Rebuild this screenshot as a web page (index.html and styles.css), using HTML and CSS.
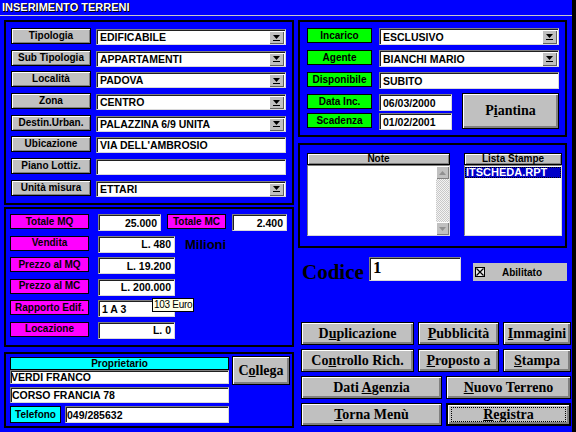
FILE: index.html
```html
<!DOCTYPE html>
<html>
<head>
<meta charset="utf-8">
<title>Inserimento Terreni</title>
<link rel="stylesheet" href="styles.css">
</head>
<body>
<div class="window">
  <div class="titlebar">INSERIMENTO TERRENI</div>
  <div class="main">
    <div class="col-left">
      <section class="panel p-ident">
        <div class="lbl gray">Tipologia</div>
        <div class="field combo"><span class="val">EDIFICABILE</span><span class="drop"><svg width="7" height="6" viewBox="0 0 7 6"><path d="M0 0H7L3.5 4Z"/><rect y="5" width="7" height="1"/></svg></span></div>
        <div class="lbl gray">Sub Tipologia</div>
        <div class="field combo"><span class="val">APPARTAMENTI</span><span class="drop"><svg width="7" height="6" viewBox="0 0 7 6"><path d="M0 0H7L3.5 4Z"/><rect y="5" width="7" height="1"/></svg></span></div>
        <div class="lbl gray">Località</div>
        <div class="field combo"><span class="val">PADOVA</span><span class="drop"><svg width="7" height="6" viewBox="0 0 7 6"><path d="M0 0H7L3.5 4Z"/><rect y="5" width="7" height="1"/></svg></span></div>
        <div class="lbl gray">Zona</div>
        <div class="field combo"><span class="val">CENTRO</span><span class="drop"><svg width="7" height="6" viewBox="0 0 7 6"><path d="M0 0H7L3.5 4Z"/><rect y="5" width="7" height="1"/></svg></span></div>
        <div class="lbl gray">Destin.Urban.</div>
        <div class="field combo"><span class="val">PALAZZINA 6/9 UNITA</span><span class="drop"><svg width="7" height="6" viewBox="0 0 7 6"><path d="M0 0H7L3.5 4Z"/><rect y="5" width="7" height="1"/></svg></span></div>
        <div class="lbl gray">Ubicazione</div>
        <div class="field">VIA DELL'AMBROSIO</div>
        <div class="lbl gray">Piano Lottiz.</div>
        <div class="field"></div>
        <div class="lbl gray">Unità misura</div>
        <div class="field combo"><span class="val">ETTARI</span><span class="drop"><svg width="7" height="6" viewBox="0 0 7 6"><path d="M0 0H7L3.5 4Z"/><rect y="5" width="7" height="1"/></svg></span></div>
      </section>

      <section class="panel p-prices">
        <div class="prow">
          <div class="lbl mag">Totale MQ</div>
          <div class="field num w63">25.000</div>
          <div class="lbl mag w59">Totale MC</div>
          <div class="field num w55">2.400</div>
        </div>
        <div class="prow">
          <div class="lbl mag">Vendita</div>
          <div class="field num">L. 480</div>
          <span class="milioni">Milioni</span>
        </div>
        <div class="prow">
          <div class="lbl mag">Prezzo al MQ</div>
          <div class="field num">L. 19.200</div>
        </div>
        <div class="prow">
          <div class="lbl mag">Prezzo al MC</div>
          <div class="field num">L. 200.000</div>
        </div>
        <div class="prow">
          <div class="lbl mag">Rapporto Edif.</div>
          <div class="field">1 A 3</div>
          <div class="tooltip">103 Euro</div>
        </div>
        <div class="prow">
          <div class="lbl mag">Locazione</div>
          <div class="field num">L. 0</div>
        </div>
      </section>

      <section class="panel p-owner">
        <div class="owner">
          <div class="owner-head">Proprietario</div>
          <div class="field f1">VERDI FRANCO</div>
          <div class="field f2">CORSO FRANCIA 78</div>
          <div class="tel">
            <div class="lbl cyan">Telefono</div>
            <div class="field">049/285632</div>
          </div>
        </div>
        <div class="btn collega"><span>C<u>o</u>llega</span></div>
      </section>
    </div>

    <div class="col-right">
      <section class="panel p-mandate">
        <div class="lbl grn r1">Incarico</div>
        <div class="field combo r1"><span class="val">ESCLUSIVO</span><span class="drop"><svg width="7" height="6" viewBox="0 0 7 6"><path d="M0 0H7L3.5 4Z"/><rect y="5" width="7" height="1"/></svg></span></div>
        <div class="lbl grn r2">Agente</div>
        <div class="field combo r2"><span class="val">BIANCHI MARIO</span><span class="drop"><svg width="7" height="6" viewBox="0 0 7 6"><path d="M0 0H7L3.5 4Z"/><rect y="5" width="7" height="1"/></svg></span></div>
        <div class="lbl grn r3">Disponibile</div>
        <div class="field r3">SUBITO</div>
        <div class="lbl grn r4">Data Inc.</div>
        <div class="field short r4">06/03/2000</div>
        <div class="lbl grn r5">Scadenza</div>
        <div class="field short r5">01/02/2001</div>
        <div class="btn piantina"><span>P<u>i</u>antina</span></div>
      </section>

      <section class="panel p-notes">
        <div class="notes">
          <div class="hdr">Note</div>
          <div class="listbody notebody">
            <div class="notearea"></div>
            <div class="scroll">
              <div class="sbtn"><svg width="7" height="4" viewBox="0 0 7 4"><path d="M0 4H7L3.5 0Z"/></svg></div>
              <div class="track"></div>
              <div class="sbtn"><svg width="7" height="4" viewBox="0 0 7 4"><path d="M0 0H7L3.5 4Z"/></svg></div>
            </div>
          </div>
        </div>
        <div class="lists">
          <div class="hdr">Lista Stampe</div>
          <div class="listbody">
            <div class="sel">ITSCHEDA.RPT</div>
          </div>
        </div>
      </section>

      <div class="codice-row">
        <div class="codice-lbl">Codice</div>
        <div class="field codice-in">1</div>
        <div class="abil">
          <span class="chk"><svg width="8" height="8" viewBox="0 0 8 8"><path d="M0.5 0.5L7.5 7.5M7.5 0.5L0.5 7.5" stroke="#000" stroke-width="1.2"/></svg></span>
          <span class="abil-txt">Abilitato</span>
        </div>
      </div>

      <div class="btns">
        <div class="brow">
          <div class="btn w113"><span>D<u>u</u>plicazione</span></div>
          <div class="btn w81"><span><u>P</u>ubblicità</span></div>
          <div class="btn w68"><span><u>I</u>mmagini</span></div>
        </div>
        <div class="brow">
          <div class="btn w113"><span>Co<u>n</u>trollo Rich.</span></div>
          <div class="btn w81"><span><u>P</u>roposto a</span></div>
          <div class="btn w68"><span><u>S</u>tampa</span></div>
        </div>
        <div class="brow">
          <div class="btn w141"><span>Dati <u>A</u>genzia</span></div>
          <div class="btn w125"><span><u>N</u>uovo Terreno</span></div>
        </div>
        <div class="brow">
          <div class="btn w141"><span><u>T</u>orna Menù</span></div>
          <div class="btn w125 default"><span><u>R</u>egistra</span></div>
        </div>
      </div>
    </div>
  </div>
</div>
</body>
</html>
```

FILE: styles.css
```css
* { box-sizing: border-box; margin: 0; padding: 0; }
html, body { width: 576px; height: 432px; }
body {
  background: #0000ff;
  overflow: hidden;
  font-family: "Liberation Sans", Arial, sans-serif;
  font-size: 10px;
  font-weight: bold;
  color: #000;
}
.window {
  width: 576px;
  height: 432px;
  border-right: 4px solid #000;
  display: flex;
  flex-direction: column;
}
.titlebar {
  height: 16px;
  border-bottom: 1px solid #c8c8c8;
  color: #fff;
  font-size: 11px;
  line-height: 15px;
  padding-left: 2px;
  text-shadow: 1px 1px 0 #000, 1px 0 0 #000;
}
.main { display: flex; gap: 4px; padding: 4px 0 0 4px; }
.col-left { width: 290px; display: flex; flex-direction: column; }
.col-right { width: 274px; display: flex; flex-direction: column; }
.panel { border: 2px solid #000; }

/* labels */
.lbl {
  display: flex;
  align-items: center;
  justify-content: center;
  border: 1px solid #000;
  white-space: nowrap;
  line-height: 1;
}
.gray {
  background: #c0c0c0;
  height: 16px;
  box-shadow: inset 1px 1px 0 #fff, inset -1px -1px 0 #808080;
}
.mag { background: #ff00ff; height: 15px; }
.grn { background: #00ff00; height: 15px; }
.cyan { background: #00ffff; }

/* fields */
.field {
  background: #fff;
  border: 1px solid;
  border-color: #808080 #d8d8d8 #d8d8d8 #808080;
  box-shadow: inset 1px 1px 0 #202020;
  display: flex;
  align-items: center;
  padding-left: 3px;
  white-space: nowrap;
  overflow: hidden;
  height: 16px;
  font-size: 10.5px;
}
.combo { padding-right: 1px; }
.combo .val { flex: 1; }
.drop {
  width: 15px;
  align-self: stretch;
  margin-top: 1px;
  background: #c0c0c0;
  box-shadow: inset 1px 1px 0 #fff, inset -1px -1px 0 #606060;
  display: flex;
  align-items: center;
  justify-content: center;
}
.num { justify-content: flex-end; padding-right: 3px; }

/* panel 1 */
.p-ident {
  height: 185px;
  padding: 6px 0 0 5px;
  display: grid;
  grid-template-columns: 80px 190px;
  grid-auto-rows: 17px;
  column-gap: 5px;
  row-gap: 4.7px;
  align-content: start;
}
.p-ident .field { margin-top: 1px; height: 16px; }

/* panel 2 */
.p-prices {
  height: 140px;
  margin-top: 2px;
  padding: 5px 0 0 4px;
  display: flex;
  flex-direction: column;
  gap: 4.6px;
}
.prow { display: flex; align-items: flex-start; height: 17px; position: relative; }
.prow .mag { width: 79px; }
.prow .field { height: 17px; margin-left: 9px; width: 77px; }
.prow .w63 { width: 63px; }
.prow .mag.w59 { width: 59px; margin-left: 6px; }
.prow .w55 { width: 55px; margin-left: 6px; }
.milioni { margin-left: 10px; font-size: 13px; line-height: 17px; }
.tooltip {
  position: absolute;
  left: 142px;
  top: -2px;
  height: 14px;
  background: #ffffe8;
  border: 1px solid #000;
  font-weight: normal;
  font-size: 10px;
  letter-spacing: -0.3px;
  line-height: 12px;
  padding: 0 1px;
  white-space: nowrap;
}

/* panel 3 */
.p-owner {
  height: 76px;
  margin-top: 5px;
  padding: 2px 0 0 4px;
  display: flex;
  gap: 3px;
}
.owner { width: 219px; margin-top: 1px; display: flex; flex-direction: column; }
.owner-head {
  height: 13px;
  background: #00ffff;
  border: 1px solid #000;
  text-align: center;
  line-height: 11px;
}
.owner .f1 { height: 14px; padding-left: 0; }
.owner .f2 { height: 16px; margin-top: 3px; padding-left: 1px; }
.tel { display: flex; gap: 4px; margin-top: 3px; height: 17px; }
.tel .cyan { width: 51px; height: 17px; }
.tel .field { flex: 1; height: 17px; padding-left: 1px; }

/* buttons */
.btn {
  background: #c0c0c0;
  border: 1px solid #000;
  box-shadow: inset 1px 1px 0 #fff, inset -1px -1px 0 #808080, inset -2px -2px 0 #808080;
  font-family: "Liberation Serif", "Times New Roman", serif;
  font-weight: bold;
  font-size: 14px;
  display: flex;
  align-items: center;
  justify-content: center;
  white-space: nowrap;
}
.btn u { text-underline-offset: 1px; }
.collega { width: 58px; height: 29px; }

/* panel 4 */
.p-mandate {
  width: 269px;
  height: 117px;
  padding: 6px 0 0 7px;
  display: grid;
  grid-template-columns: 65px 7px 73px 10px 97px;
  grid-template-rows: 22px 22px 22px 19px 17px;
}
.p-mandate .grn { grid-column: 1; height: 15px; }
.p-mandate .field { grid-column: 3 / 6; height: 17px; }
.p-mandate .field.short { grid-column: 3; }
.r1 { grid-row: 1; }
.r2 { grid-row: 2; }
.r3 { grid-row: 3; }
.r4 { grid-row: 4; }
.r5 { grid-row: 5; }
.piantina { grid-column: 5; grid-row: 4 / 6; height: 36px; margin-top: -1px; }

/* panel 5 */
.p-notes {
  width: 269px;
  height: 105px;
  margin-top: 6px;
  padding: 8px 0 0 7px;
  display: flex;
  gap: 14px;
}
.notes { width: 143px; }
.lists { width: 98px; }
.hdr {
  height: 12px;
  background: #c0c0c0;
  border: 1px solid #000;
  box-shadow: inset 1px 1px 0 #fff, inset -1px -1px 0 #808080;
  text-align: center;
  line-height: 10px;
  white-space: nowrap;
}
.listbody {
  height: 71px;
  background: #fff;
  border: 1px solid;
  border-color: #808080 #d8d8d8 #d8d8d8 #808080;
}
.notebody { display: flex; }
.notearea { flex: 1; }
.scroll { width: 13px; display: flex; flex-direction: column; }
.sbtn {
  height: 13px;
  background: #c0c0c0;
  box-shadow: inset 1px 1px 0 #fff, inset -1px -1px 0 #808080;
  display: flex;
  align-items: center;
  justify-content: center;
  fill: #909090;
}
.track {
  flex: 1;
  background: repeating-conic-gradient(#c8c8c8 0 25%, #f4f4f4 0 50%) 0 0 / 2px 2px;
}
.sel {
  margin: 1px 0 0 0;
  height: 11px;
  background: #0000c8;
  outline: 1px dotted #000;
  outline-offset: -1px;
  color: #fff;
  font-size: 11px;
  line-height: 11px;
  padding-left: 1px;
}

/* codice */
.codice-row {
  display: flex;
  align-items: flex-end;
  margin-top: 9px;
  padding-left: 4px;
  height: 24px;
}
.codice-lbl {
  font-family: "Liberation Serif", "Times New Roman", serif;
  font-size: 21px;
  line-height: 18px;
  height: 18px;
  width: 61px;
}
.codice-in {
  width: 92px;
  height: 24px;
  margin-left: 6px;
  font-family: "Liberation Serif", "Times New Roman", serif;
  font-size: 17px;
  line-height: 17px;
  align-items: flex-start;
  padding: 1px 3px;
}
.abil {
  width: 94px;
  height: 18px;
  margin-left: 12px;
  background: #c0c0c0;
  display: flex;
  align-items: center;
  padding-left: 2px;
}
.chk {
  width: 10px;
  height: 10px;
  border: 1px solid #000;
  background: #e8e8e8;
  display: flex;
  align-items: center;
  justify-content: center;
}
.abil-txt { margin-left: 17px; }

/* command buttons */
.btns {
  margin: 41px 0 0 3px;
  width: 270px;
  display: flex;
  flex-direction: column;
  gap: 4px;
}
.brow { display: flex; gap: 4px; height: 23px; }
.w113 { width: 113px; }
.w81 { width: 81px; }
.w68 { width: 68px; }
.w141 { width: 141px; }
.w125 { width: 125px; }
.default { border: 2px solid #000; position: relative; }
.default::after {
  content: "";
  position: absolute;
  inset: 2px 3px;
  border: 1px dotted #000;
}
```
